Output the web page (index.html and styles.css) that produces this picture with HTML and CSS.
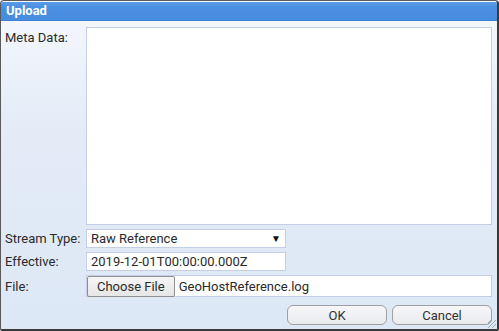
FILE: index.html
```html
<!DOCTYPE html>
<html lang="en">
<head>
  <meta charset="UTF-8">
  <title>Upload</title>
  <link rel="stylesheet" href="styles.css">
</head>
<body>

  <!-- Upload Dialog -->
  <div class="dialog">
    <div class="titlebar">Upload</div>
    <div class="content">
      <div class="row meta">
        <label>Meta Data:</label>
        <textarea class="meta-box"></textarea>
      </div>
      <div class="row">
        <label>Stream Type:</label>
        <div class="select-box">
          <span>Raw Reference</span>
          <span class="arrow">&#9660;</span>
        </div>
      </div>
      <div class="row">
        <label>Effective:</label>
        <input type="text" class="text-box" value="2019-12-01T00:00:00.000Z">
      </div>
      <div class="row">
        <label>File:</label>
        <div class="file-box">
          <span class="choose">Choose File</span>
          <span class="file-name">GeoHostReference.log</span>
        </div>
      </div>
      <div class="actions">
        <button class="btn">OK</button>
        <button class="btn">Cancel</button>
      </div>
    </div>
    <div class="grip"></div>
  </div>

</body>
</html>
```

FILE: styles.css
```css
:root {
  --title-color: #4a8fe1;
  --field-border: #c4cfe6;
  --text-color: #2a2a2a;
}

body {
  margin: 0;
  font-family: Roboto, 'Liberation Sans', sans-serif;
  font-size: 13px;
  color: var(--text-color);
}

.dialog {
  position: relative;
  width: 499px;
  height: 331px;
  box-sizing: border-box;
  border: 1px solid #5a5a5a;
  border-right: 2px solid #3a3a3a;
  border-bottom: 2px solid #3a3a3a;
  border-radius: 4px 4px 2px 2px;
  display: flex;
  flex-direction: column;
  overflow: hidden;
  background: linear-gradient(180deg, #f6f8fc 0%, #e3ebf7 40%, #dde8f6 100%);
}

.titlebar {
  height: 18px;
  margin-top: 1px;
  padding-left: 5px;
  background: linear-gradient(180deg, #5a9be6 0%, #4a8fe1 30%, #468ce0 100%);
  color: #fff;
  font-weight: bold;
  font-size: 13px;
  line-height: 18px;
  border-bottom: 1px solid #3d7fd0;
}

.content {
  flex: 1;
  display: flex;
  flex-direction: column;
  padding: 6px 5px 0 4px;
  gap: 4px;
}

.row {
  display: flex;
  align-items: center;
}

.row label {
  width: 81px;
  flex-shrink: 0;
}

.row.meta {
  align-items: flex-start;
}

.row.meta label {
  padding-top: 3px;
}

.meta-box {
  width: 407px;
  height: 198px;
  box-sizing: border-box;
  border: 1px solid var(--field-border);
  background: #fff;
  resize: none;
  margin: 0;
}

.select-box,
.text-box {
  width: 200px;
  height: 19px;
  box-sizing: border-box;
  border: 1px solid var(--field-border);
  background: #fff;
  font-family: inherit;
  font-size: 13px;
  color: var(--text-color);
  padding: 0 4px;
  margin: 0;
}

.select-box {
  display: flex;
  align-items: center;
  justify-content: space-between;
}

.select-box .arrow {
  font-size: 10px;
  margin-right: 0;
  color: #111;
}

.file-box {
  width: 407px;
  height: 22px;
  box-sizing: border-box;
  border: 1px solid var(--field-border);
  background: #fff;
  display: flex;
  align-items: center;
}

.choose {
  margin-left: 0;
  height: 19px;
  line-height: 19px;
  padding: 0 9px;
  border: 1px solid #8f8f8f;
  border-radius: 2px;
  background: linear-gradient(180deg, #f6f6f6 0%, #e6e6e6 100%);
  font-size: 13px;
}

.file-name {
  padding-left: 4px;
  font-size: 13px;
}

.actions {
  display: flex;
  justify-content: flex-end;
  gap: 5px;
  margin-top: 4px;
}

.btn {
  width: 100px;
  height: 20px;
  border: 1px solid #a0a0a0;
  border-radius: 6px;
  background: linear-gradient(180deg, #f7f7f9 0%, #e9ebef 100%);
  font-family: inherit;
  font-size: 13px;
  color: #333;
  padding: 0;
}

.grip {
  position: absolute;
  right: 1px;
  bottom: 1px;
  width: 8px;
  height: 8px;
  background: repeating-linear-gradient(135deg, transparent 0 2px, #9aa 2px 3px);
}
```
